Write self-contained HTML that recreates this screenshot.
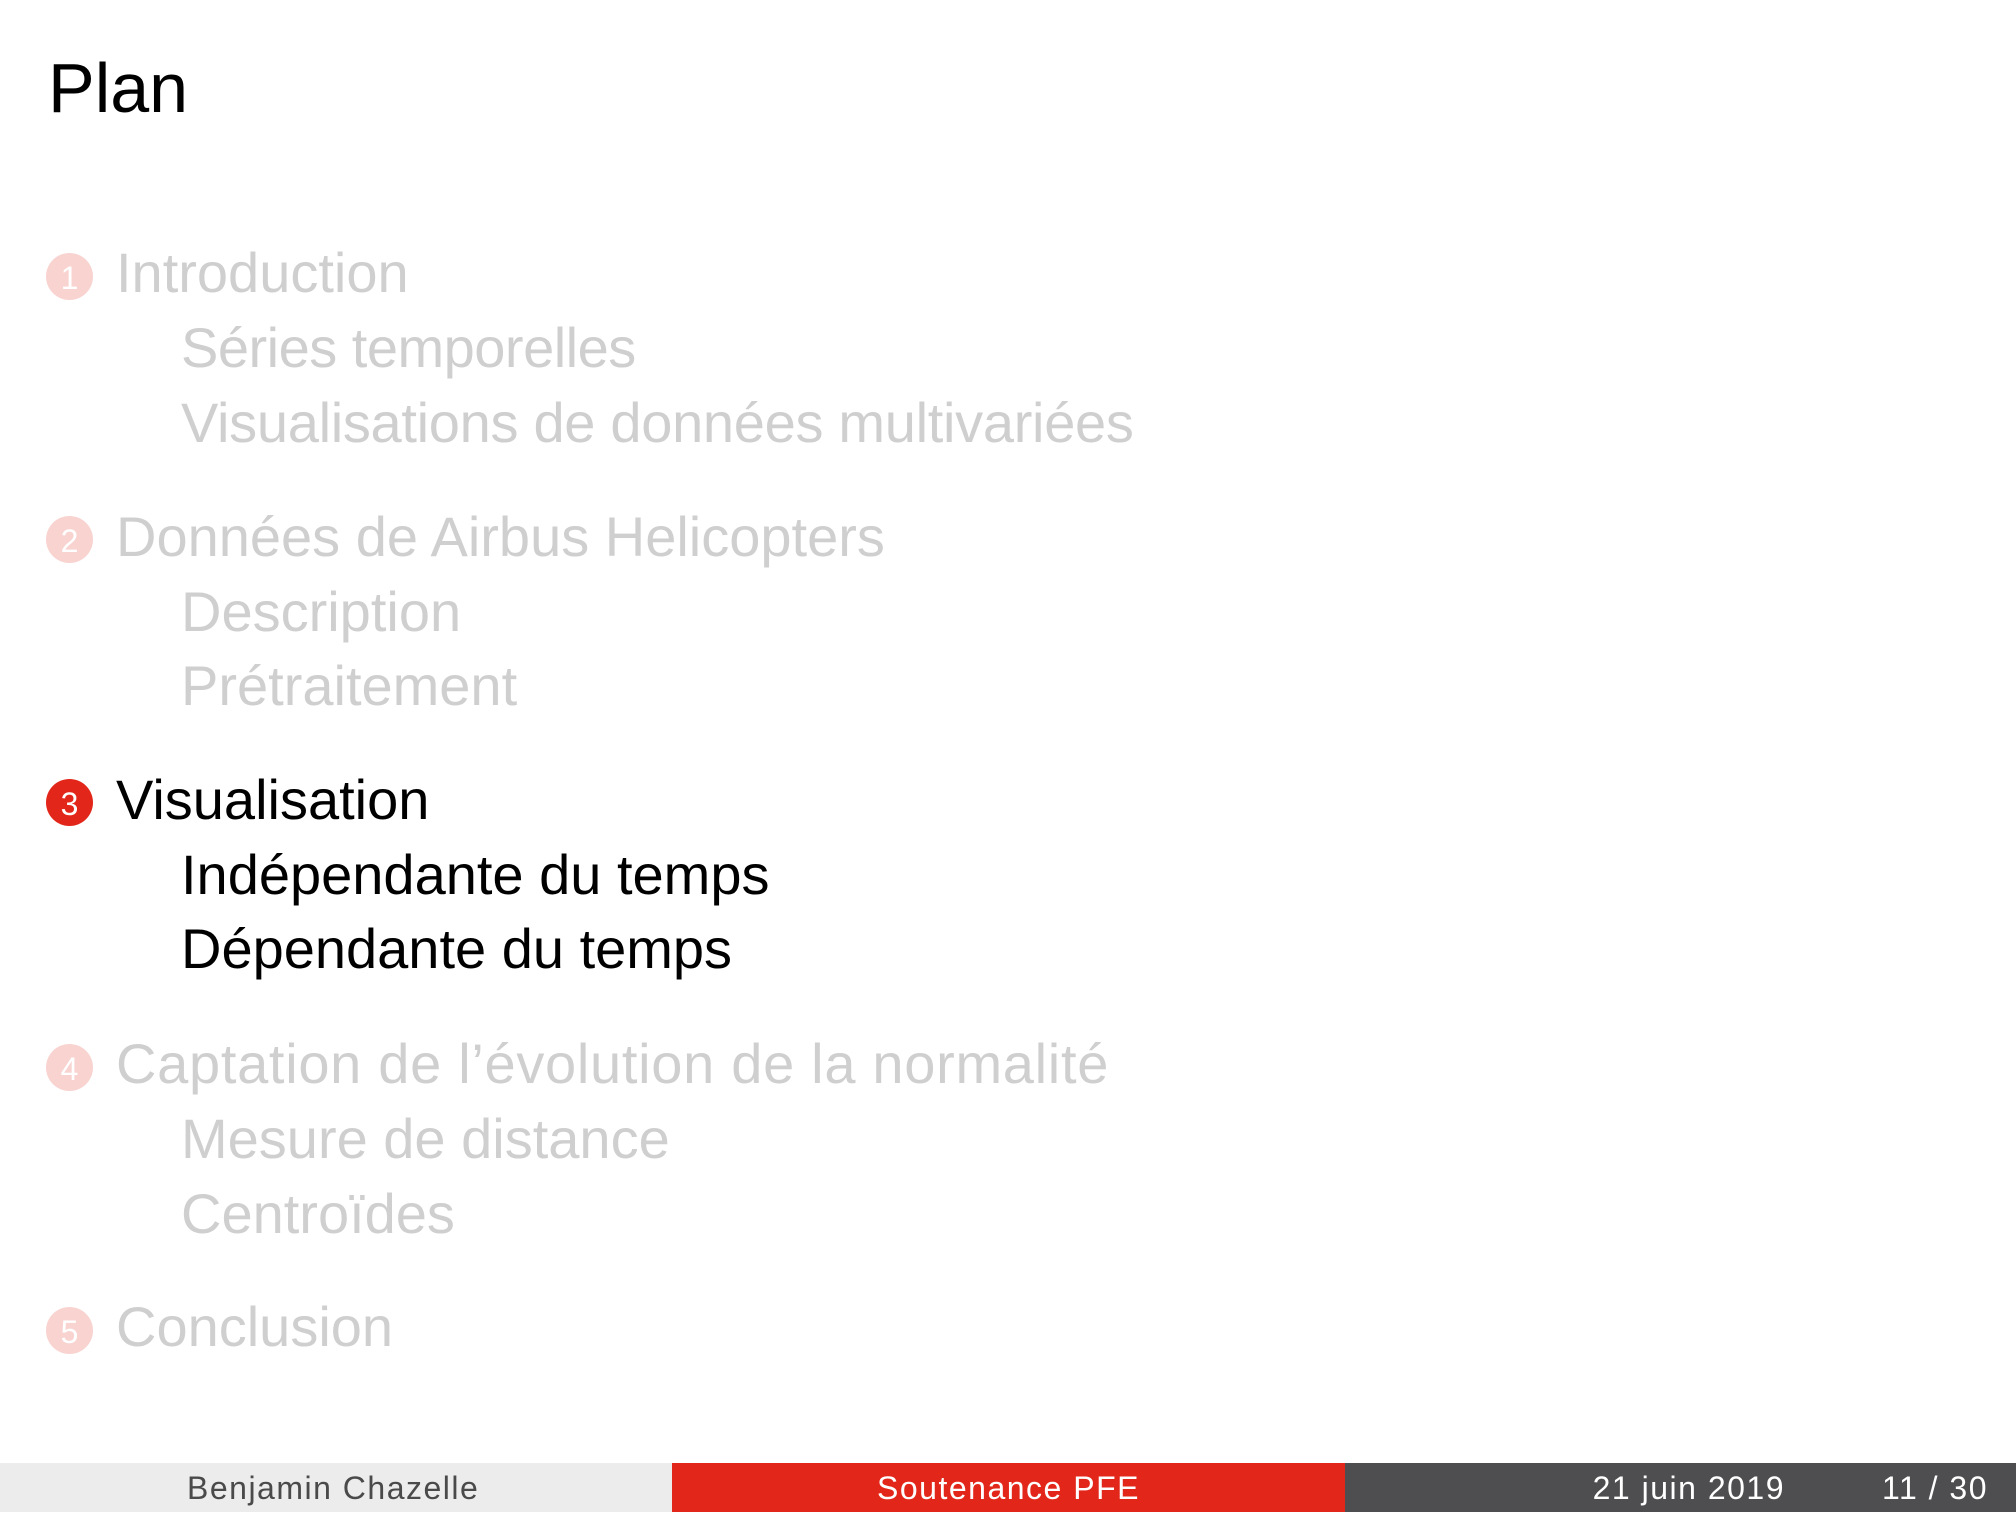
<!DOCTYPE html>
<html><head><meta charset="utf-8"><style>
html,body{margin:0;padding:0;}
body{width:2016px;height:1512px;position:relative;overflow:hidden;background:#fff;font-family:"Liberation Sans",sans-serif;}
.t{position:absolute;white-space:nowrap;line-height:1;}
.s{font-size:56px;color:#cfcfcf;}
.a{color:#000;}
.c{position:absolute;width:47px;height:47px;border-radius:50%;background:#f8d3d0;color:#fff;font-family:"Liberation Sans",sans-serif;font-size:32px;line-height:50px;text-align:center;}
.c.a{background:#e2261a;}
.f{position:absolute;top:1463px;height:49px;font-size:32px;letter-spacing:1.5px;line-height:50px;}
</style></head><body>
<div class="t" style="left:48px;top:53px;font-size:70px;color:#000;">Plan</div>

<div class="c" style="left:46px;top:253px;">1</div>
<div class="t s" style="left:116px;top:245px;">Introduction</div>
<div class="t s" style="left:181px;top:320px;letter-spacing:-0.5px;">Séries temporelles</div>
<div class="t s" style="left:181px;top:395px;letter-spacing:-0.3px;">Visualisations de données multivariées</div>

<div class="c" style="left:46px;top:516px;">2</div>
<div class="t s" style="left:116px;top:509px;">Données de Airbus Helicopters</div>
<div class="t s" style="left:181px;top:584px;">Description</div>
<div class="t s" style="left:181px;top:658px;">Prétraitement</div>

<div class="c a" style="left:46px;top:779px;">3</div>
<div class="t s a" style="left:116px;top:772px;">Visualisation</div>
<div class="t s a" style="left:181px;top:847px;">Indépendante du temps</div>
<div class="t s a" style="left:181px;top:921px;">Dépendante du temps</div>

<div class="c" style="left:46px;top:1044px;">4</div>
<div class="t s" style="left:116px;top:1036px;letter-spacing:0.7px;">Captation de l’évolution de la normalité</div>
<div class="t s" style="left:181px;top:1111px;">Mesure de distance</div>
<div class="t s" style="left:181px;top:1186px;">Centroïdes</div>

<div class="c" style="left:46px;top:1307px;">5</div>
<div class="t s" style="left:116px;top:1299px;">Conclusion</div>

<div class="f" style="left:0;width:672px;background:#ececec;color:#4a4a4a;"><span style="position:absolute;left:187px;">Benjamin Chazelle</span></div>
<div class="f" style="left:672px;width:673px;background:#e3261a;color:#fff;text-align:center;">Soutenance PFE</div>
<div class="f" style="left:1345px;width:671px;background:#4e4d50;color:#fff;"><span style="position:absolute;right:231px;">21 juin 2019</span><span style="position:absolute;right:28px;">11 / 30</span></div>
</body></html>
